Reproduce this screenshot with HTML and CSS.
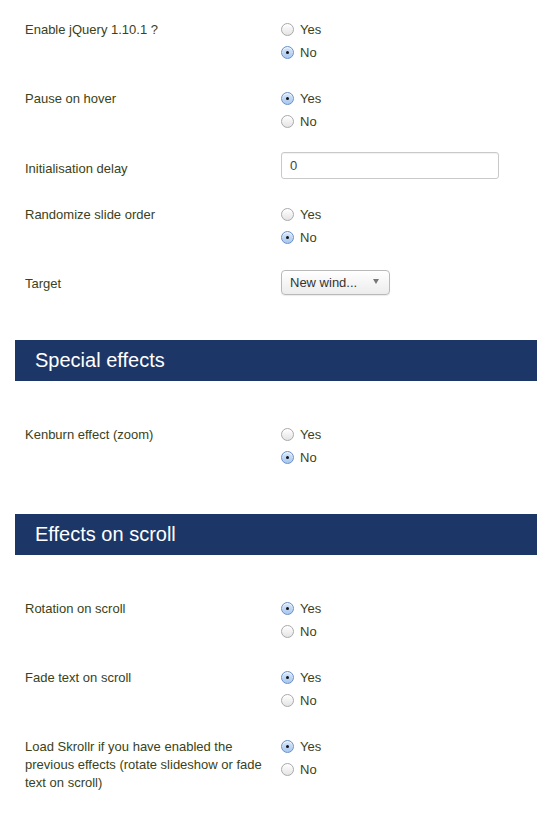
FILE: index.html
```html
<!DOCTYPE html>
<html>
<head>
<meta charset="utf-8">
<link rel="stylesheet" href="styles.css">
</head>
<body>
<div class="page">
  <div class="row">
    <div class="label">Enable jQuery 1.10.1 ?</div>
    <div class="controls">
      <div class="radio"><span class="circle"></span>Yes</div>
      <div class="radio"><span class="circle on"></span>No</div>
    </div>
  </div>
  <div class="row">
    <div class="label">Pause on hover</div>
    <div class="controls">
      <div class="radio"><span class="circle on"></span>Yes</div>
      <div class="radio"><span class="circle"></span>No</div>
    </div>
  </div>
  <div class="row row-input">
    <div class="label">Initialisation delay</div>
    <div class="controls">
      <div class="input">0</div>
    </div>
  </div>
  <div class="row">
    <div class="label">Randomize slide order</div>
    <div class="controls">
      <div class="radio"><span class="circle"></span>Yes</div>
      <div class="radio"><span class="circle on"></span>No</div>
    </div>
  </div>
  <div class="row row-select">
    <div class="label">Target</div>
    <div class="controls">
      <div class="select"><span>New wind...</span><span class="arrow"></span></div>
    </div>
  </div>

  <h2 class="section first">Special effects</h2>

  <div class="row">
    <div class="label">Kenburn effect (zoom)</div>
    <div class="controls">
      <div class="radio"><span class="circle"></span>Yes</div>
      <div class="radio"><span class="circle on"></span>No</div>
    </div>
  </div>

  <h2 class="section">Effects on scroll</h2>

  <div class="row">
    <div class="label">Rotation on scroll</div>
    <div class="controls">
      <div class="radio"><span class="circle on"></span>Yes</div>
      <div class="radio"><span class="circle"></span>No</div>
    </div>
  </div>
  <div class="row">
    <div class="label">Fade text on scroll</div>
    <div class="controls">
      <div class="radio"><span class="circle on"></span>Yes</div>
      <div class="radio"><span class="circle"></span>No</div>
    </div>
  </div>
  <div class="row">
    <div class="label multi">Load Skrollr if you have enabled the previous effects (rotate slideshow or fade text on scroll)</div>
    <div class="controls">
      <div class="radio"><span class="circle on"></span>Yes</div>
      <div class="radio"><span class="circle"></span>No</div>
    </div>
  </div>
</div>
</body>
</html>
```
FILE: styles.css
```css
html, body {
  margin: 0;
  padding: 0;
  background: #fff;
}
body {
  font-family: "Liberation Sans", Arial, sans-serif;
  font-size: 13px;
  color: #3a4220;
}
.page {
  padding: 18px 0 0 15px;
}
.row {
  display: flex;
  align-items: flex-start;
  padding-left: 10px;
  margin-bottom: 23px;
}
.label {
  width: 256px;
  flex: none;
  line-height: 23px;
  padding-right: 12px;
  box-sizing: border-box;
}
.label.multi {
  line-height: 18px;
  padding-top: 3px;
}
.controls {
  display: flex;
  flex-direction: column;
}
.radio {
  display: flex;
  align-items: center;
  height: 23px;
  line-height: 23px;
}
.circle {
  width: 13px;
  height: 13px;
  box-sizing: border-box;
  border-radius: 50%;
  border: 1px solid #a9a9a9;
  background: linear-gradient(#ffffff, #e4e4e4);
  margin-right: 6px;
  position: relative;
  box-shadow: inset 0 1px 1px rgba(255,255,255,0.8);
}
.circle.on {
  border-color: #6b8fc6;
  background: linear-gradient(#d6e6fb, #a8c8f0);
}
.circle.on::after {
  content: "";
  position: absolute;
  left: 4px;
  top: 4px;
  width: 3px;
  height: 3px;
  border-radius: 50%;
  background: #111;
}
.row-input {
  margin-top: -4px;
  margin-bottom: 23px;
}
.row-input .label {
  margin-top: 5px;
}
.input {
  width: 218px;
  height: 27px;
  box-sizing: border-box;
  border: 1px solid #c9c9c9;
  border-radius: 3px;
  padding: 0 8px;
  line-height: 25px;
  color: #444;
  box-shadow: inset 0 1px 1px rgba(0,0,0,0.06);
}
.row-select {
  margin-top: -2px;
  margin-bottom: 45px;
}
.row-select .label {
  margin-top: 2px;
}
.select {
  width: 109px;
  height: 25px;
  box-sizing: border-box;
  border: 1px solid #b9b9b9;
  border-radius: 4px;
  background: linear-gradient(#ffffff, #ececec);
  display: flex;
  align-items: center;
  justify-content: space-between;
  padding: 0 10px 0 8px;
  color: #333;
  box-shadow: 0 1px 1px rgba(0,0,0,0.08);
}
.arrow {
  width: 0;
  height: 0;
  border-left: 3px solid transparent;
  border-right: 3px solid transparent;
  border-top: 5px solid #777;
  margin-top: -2px;
}
.section {
  margin: 0 0 42px 0;
  height: 41px;
  background: #1c3767;
  color: #fff;
  font-weight: normal;
  font-size: 20px;
  line-height: 41px;
  padding-left: 20px;
}
.row + .section {
  margin-top: 45px;
}
```
